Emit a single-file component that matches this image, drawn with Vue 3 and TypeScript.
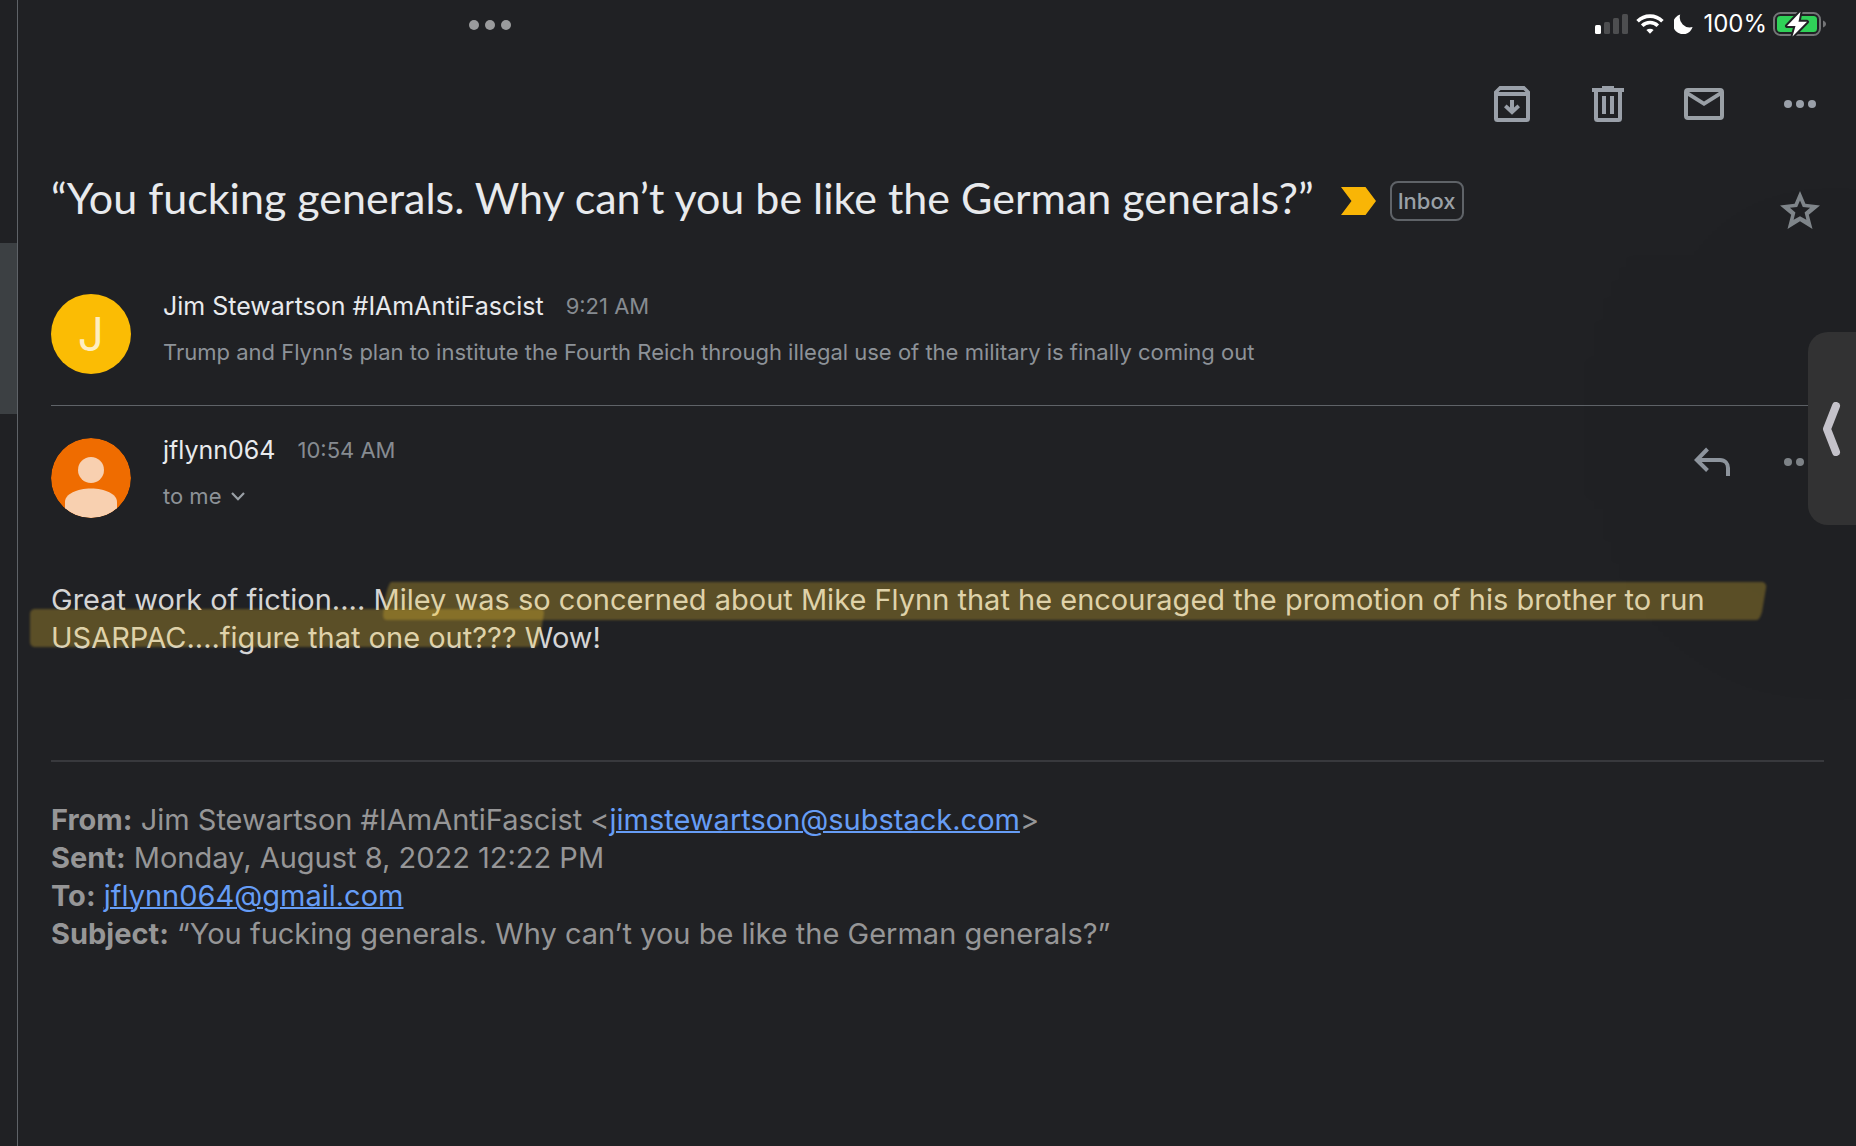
<script setup lang="ts">
interface HeaderLine {
  label: string
  before: string
  email?: string
  after?: string
}

const subject = '“You fucking generals. Why can’t you be like the German generals?”'

const quotedHeaders: HeaderLine[] = [
  { label: 'From:', before: 'Jim Stewartson #IAmAntiFascist <', email: 'jimstewartson@substack.com', after: '>' },
  { label: 'Sent:', before: 'Monday, August 8, 2022 12:22 PM' },
  { label: 'To:', before: '', email: 'jflynn064@gmail.com' },
  { label: 'Subject:', before: subject },
]
</script>

<template>
  <div class="screen">
    <aside class="list-edge">
      <div class="list-selected"></div>
    </aside>

    <main class="pane">
      <header class="status">
        <button class="multitask" aria-label="Multitasking">
          <svg width="44" height="12" viewBox="0 0 44 12" fill="#9a9b9d">
            <circle cx="6" cy="6" r="5" /><circle cx="22" cy="6" r="5" /><circle cx="38" cy="6" r="5" />
          </svg>
        </button>
        <div class="indicators">
          <svg width="34" height="20" viewBox="0 0 34 20">
            <rect x="0" y="11" width="6" height="9" rx="1.5" fill="#fff" />
            <rect x="9" y="8" width="6" height="12" rx="1.5" fill="#4d4e50" />
            <rect x="18" y="4" width="6" height="16" rx="1.5" fill="#4d4e50" />
            <rect x="27" y="0" width="6" height="20" rx="1.5" fill="#4d4e50" />
          </svg>
          <svg class="wifi" width="28" height="20" viewBox="0 0 28 20" fill="none" stroke="#fff" stroke-width="3.6">
            <path d="M1.6 7.2a17.6 17.6 0 0 1 24.8 0" />
            <path d="M6.2 11.8a11 11 0 0 1 15.6 0" />
            <path d="M14 19.8l-3.6-3.7a5.2 5.2 0 0 1 7.2 0z" fill="#fff" stroke="none" />
          </svg>
          <svg class="moon" width="19" height="20" viewBox="0 0 19 20">
            <path d="M6.2.6A10 10 0 1 0 18.6 13 10 10 0 0 1 6.2.6z" fill="#fff" />
          </svg>
          <span class="percent">100%</span>
          <svg class="battery" width="54" height="26" viewBox="0 0 54 26">
            <rect x="1" y="2" width="46" height="22" rx="6.5" fill="none" stroke="#747577" stroke-width="2" />
            <rect x="4" y="5" width="40" height="16" rx="3.5" fill="#30d158" />
            <path d="M50 9.5v7c2-.7 3-2 3-3.5s-1-2.800-3-3.500z" fill="#747577" />
            <path d="M27.500.8L14 15h8.500l-3 10.500L34 10.800h-8.500z" fill="#fff" stroke="#202124" stroke-width="4" stroke-linejoin="round" />
            <path d="M27.500.8L14 15h8.500l-3 10.500L34 10.800h-8.500z" fill="#fff" />
          </svg>
        </div>
      </header>

      <nav class="toolbar">
        <button aria-label="Archive">
          <svg width="36" height="36" viewBox="0 0 36 36">
            <path fill-rule="evenodd" d="M5.500 0h25L36 5.500V32.500a3.500 3.500 0 0 1-3.500 3.500H3.500A3.500 3.500 0 0 1 0 32.500V5.500zM6.500 4L4.500 6h27l-2-2zM4 10v22h28V10z" fill="#9aa0a9" />
            <path d="M16 14h4v7.500l3.500-3L26 21.300 18 28.800 10 21.300l2.500-2.800 3.500 3z" fill="#9aa0a9" />
          </svg>
        </button>
        <button aria-label="Delete">
          <svg width="32" height="36" viewBox="0 0 32 36" fill="#9aa0a9">
            <path fill-rule="evenodd" d="M10 0h12v2h10v4h-2v26.500a3.500 3.500 0 0 1-3.500 3.500h-21A3.500 3.500 0 0 1 2 32.500V6H0V2h10zM6 6v26h20V6z" />
            <path d="M10 10h4v18h-4zM18 10h4v18h-4z" />
          </svg>
        </button>
        <button aria-label="Mark as unread">
          <svg width="40" height="32" viewBox="0 0 40 32">
            <path fill-rule="evenodd" d="M4 0h32a4 4 0 0 1 4 4v24a4 4 0 0 1-4 4H4a4 4 0 0 1-4-4V4a4 4 0 0 1 4-4zM4 8v20h32V8L20 18zM5 4l15 9.500L35 4z" fill="#9aa0a6" />
          </svg>
        </button>
        <button aria-label="More options">
          <svg width="32" height="8" viewBox="0 0 32 8" fill="#9aa0a9">
            <circle cx="4" cy="4" r="4" /><circle cx="16" cy="4" r="4" /><circle cx="28" cy="4" r="4" />
          </svg>
        </button>
      </nav>

      <section class="subject">
        <h1>{{ subject }}</h1>
        <div class="labels">
          <svg width="35" height="28" viewBox="0 0 35 28">
            <path d="M0 0h24.500L35 14 24.500 28H0l10.500-14z" fill="#f9b506" />
          </svg>
          <button class="inbox">Inbox</button>
        </div>
        <button class="star" aria-label="Star">
          <svg width="40" height="38" viewBox="0 0 40 38">
            <path fill-rule="evenodd" d="M20 0l5.400 12.800L40 14.500 28.800 23.800 32.500 38 20 30.300 7.500 38l3.700-14.200L0 14.500l14.600-1.700zM20 9.500l-2.800 6.600-7.300.7 5.500 4.700-1.800 7.200L20 25.200l6.400 3.500-1.800-7.200 5.500-4.700-7.300-.7z" fill="#80868b" />
          </svg>
        </button>
      </section>

      <article class="message collapsed">
        <div class="avatar yellow">J</div>
        <div class="who">
          <p class="line"><span class="name">Jim Stewartson #IAmAntiFascist</span><time>9:21 AM</time></p>
          <p class="small">Trump and Flynn’s plan to institute the Fourth Reich through illegal use of the military is finally coming out</p>
        </div>
      </article>

      <article class="message">
        <svg class="avatar" viewBox="0 0 80 80">
          <defs><clipPath id="face"><circle cx="40" cy="40" r="40" /></clipPath></defs>
          <g clip-path="url(#face)">
            <rect width="80" height="80" fill="#ef6c00" />
            <circle cx="40" cy="32" r="13" fill="#f8d0b0" />
            <path d="M14 80V64c0-8 12-13.500 26-13.500S66 56 66 64v16z" fill="#f8d0b0" />
          </g>
        </svg>
        <div class="who">
          <p class="line"><span class="name">jflynn064</span><time>10:54 AM</time></p>
          <button class="recipients small">
            to me
            <svg width="14" height="9" viewBox="0 0 14 9" fill="none" stroke="#9aa0a6" stroke-width="2.200">
              <path d="M1 1l6 6.200L13 1" />
            </svg>
          </button>
        </div>
        <div class="actions">
          <button aria-label="Reply">
            <svg width="36" height="30" viewBox="0 0 36 30" fill="none" stroke="#9097a0" stroke-width="4">
              <path d="M3 13h23c5 0 8 3.500 8 8v8" />
              <path d="M13.500 2L2.800 13l10.700 10.500" />
            </svg>
          </button>
          <button aria-label="More message options">
            <svg width="32" height="8" viewBox="0 0 32 8" fill="#80868b">
              <circle cx="4" cy="4" r="4" /><circle cx="16" cy="4" r="4" /><circle cx="28" cy="4" r="4" />
            </svg>
          </button>
        </div>
      </article>

      <div class="body">
        <p>Great work of fiction.... Miley was so concerned about Mike Flynn that he encouraged the promotion of his brother to run USARPAC....figure that one out??? Wow!</p>
        <svg class="marker first" viewBox="0 0 1384 38" preserveAspectRatio="none">
          <path d="M8 0H1380q4 2 3 6l-4 24q-2 7-5 8H4q-4 0-4-5Q3 5 8 0z" />
        </svg>
        <svg class="marker second" viewBox="0 0 514 38" preserveAspectRatio="none">
          <path d="M4 0H510q4 0 4 4l-5 30q-1 4-5 4H4q-4-1-4-5V5q0-4 4-5z" />
        </svg>
      </div>

      <hr />

      <div class="quoted">
        <p v-for="line in quotedHeaders" :key="line.label">
          <b>{{ line.label }}</b>&#32;{{ line.before }}<a v-if="line.email" :href="'mailto:' + line.email">{{ line.email }}</a>{{ line.after }}
        </p>
      </div>
    </main>

    <button class="drawer" aria-label="Show floating window">
      <svg width="18" height="54" viewBox="0 0 18 54" fill="none" stroke="#c4c2ca" stroke-width="8" stroke-linecap="round" stroke-linejoin="round">
        <path d="M13 4L4 27l9 23" />
      </svg>
    </button>
  </div>
</template>

<style>
body {
  margin: 0;
  background: #202124;
}
</style>

<style scoped>
.screen {
  position: relative;
  display: flex;
  min-height: 100vh;
  overflow: hidden;
  background: #202124;
  color: #e8eaed;
  font-family: Inter, "Liberation Sans", sans-serif;
}

h1,
p {
  margin: 0;
  font-weight: 400;
}

button {
  display: flex;
  align-items: center;
  justify-content: center;
  padding: 0;
  border: 0;
  background: none;
  color: inherit;
  font: inherit;
}

svg {
  display: block;
  flex: none;
}

.list-edge {
  flex: none;
  width: 17px;
  padding-top: 243px;
  border-right: 1px solid #5f6368;
}

.list-selected {
  height: 171px;
  background: #3c4043;
}

.pane {
  flex: 1;
  min-width: 0;
  padding: 0 32px 0 33px;
}

.status {
  display: flex;
  align-items: center;
  justify-content: space-between;
  height: 48px;
}

.multitask {
  margin-left: 417px;
  padding-top: 2px;
}

.indicators {
  display: flex;
  align-items: center;
}

.wifi {
  margin-left: 7px;
}

.moon {
  margin-left: 10px;
}

.percent {
  margin-left: 10px;
  color: #fff;
  font-size: 24px;
  line-height: 32px;
}

.battery {
  margin-left: 6px;
  margin-right: -3px;
}

.toolbar {
  display: flex;
  justify-content: flex-end;
  gap: 48px;
  margin-top: 28px;
}

.toolbar button {
  width: 48px;
  height: 56px;
}

.subject {
  display: flex;
  margin-top: 36px;
}

h1 {
  font-family: Lato, "Open Sans", sans-serif;
  font-size: 43px;
  line-height: 60px;
}

.labels {
  display: flex;
  align-items: center;
  gap: 14px;
  height: 40px;
  margin: 13px 0 0 27px;
}

.inbox {
  height: 40px;
  padding: 0 6px;
  border: 2px solid #5f6368;
  border-radius: 8px;
  color: #9aa0a6;
  font-size: 22px;
  font-weight: 500;
}

.star {
  width: 48px;
  height: 48px;
  margin: 18px 0 0 auto;
}

.message {
  display: flex;
  gap: 32px;
  padding-top: 28px;
}

.collapsed {
  padding-bottom: 31px;
  border-bottom: 1px solid #5f6368;
}

.subject + .message {
  padding-top: 56px;
}

.avatar {
  flex: none;
  width: 80px;
  height: 80px;
  margin-top: 4px;
  border-radius: 50%;
}

.yellow {
  background: #fbbc04;
  color: #feeec0;
  font-size: 46px;
  line-height: 80px;
  text-align: center;
}

.line {
  display: flex;
  align-items: center;
  gap: 22px;
  margin-bottom: 14px;
  font-size: 25px;
  line-height: 32px;
}

time {
  color: #868b91;
  font-size: 22px;
}

.small {
  color: #8d9298;
  font-size: 22px;
  line-height: 32px;
}

.recipients {
  gap: 10px;
}

.actions {
  display: flex;
  gap: 40px;
  margin: 4px 0 0 auto;
}

.actions button {
  width: 48px;
  height: 48px;
}

.body {
  position: relative;
  margin-top: 63px;
  color: #d5d5d6;
  font-size: 29px;
  line-height: 38px;
}

.marker {
  position: absolute;
  height: 38px;
  fill: rgba(250, 203, 47, 0.27);
  filter: blur(1px);
  overflow: visible;
}

.first {
  top: 1px;
  left: 332px;
  width: 1384px;
}

.second {
  top: 28px;
  left: -21px;
  width: 514px;
}

hr {
  height: 2px;
  margin: 103px 0 39px;
  border: 0;
  background: #38393d;
}

.quoted {
  color: #969697;
  font-size: 29px;
  line-height: 38px;
}

a {
  color: #669df6;
  text-decoration-thickness: 2px;
}

.drawer {
  position: absolute;
  top: 332px;
  right: 0;
  width: 48px;
  height: 193px;
  border-radius: 20px 0 0 20px;
  background: #323233;
  box-shadow: 0 0 240px rgba(0, 0, 0, 0.3);
}
</style>
